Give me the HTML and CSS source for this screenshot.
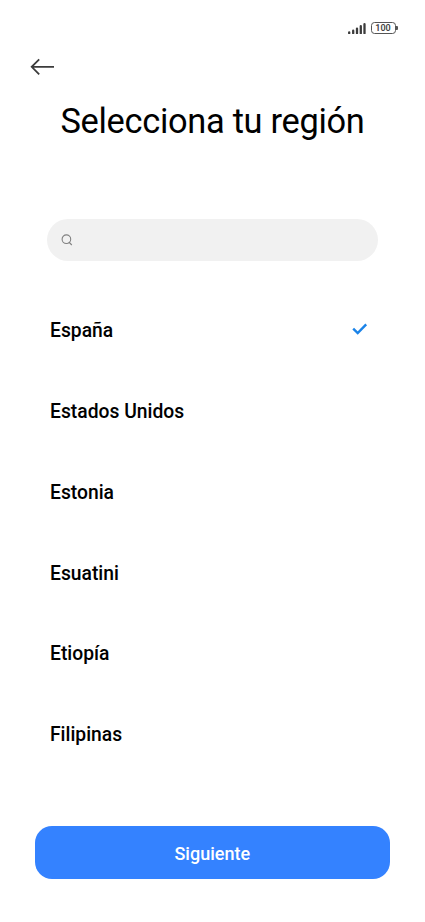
FILE: index.html
```html
<!DOCTYPE html>
<html lang="es">
<head>
<meta charset="utf-8">
<title>Selecciona tu región</title>
<link rel="stylesheet" href="styles.css">
</head>
<body>
<main class="screen">
  <header class="status">
    <svg class="signal" width="18" height="12" viewBox="0 0 18 12"><path d="M1.2 10.3v.9M5.2 8.7v2.5M9 6.6v4.6M12.8 4.2v7M16.5 2.2v9"/></svg>
    <div class="battery">100</div>
  </header>
  <nav class="nav"><svg class="back" width="26" height="20" viewBox="0 0 26 20"><path d="M9.2 2.3L1.7 9.8L9.2 17.3M1.7 9.8H24"/></svg></nav>
  <h1 class="title">Selecciona tu región</h1>
  <div class="search"><svg class="glass" width="12" height="12" viewBox="0 0 12 12"><circle cx="5.4" cy="5.2" r="4.3"/><path d="M7.8 8L10.8 11"/></svg></div>
  <ul class="list">
    <li class="item">España<svg class="check" width="16" height="12" viewBox="0 0 16 12"><path d="M1.2 5.7L5.7 10.1L14.2 1.3"/></svg></li>
    <li class="item">Estados Unidos</li>
    <li class="item">Estonia</li>
    <li class="item">Esuatini</li>
    <li class="item">Etiopía</li>
    <li class="item">Filipinas</li>
  </ul>
  <button class="next">Siguiente</button>
</main>
</body>
</html>
```
FILE: styles.css
```css
* { box-sizing: border-box; }
body { margin: 0; background: #fff; font-family: Roboto, sans-serif; color: #000; }
svg { display: block; fill: none; }
.screen { width: 425px; height: 922px; display: flex; flex-direction: column; overflow: hidden; }
.status { display: flex; gap: 4.5px; padding: 22px 27px 0 348px; height: 54px; }
.signal { stroke: #3c3c3c; stroke-width: 2.3; stroke-linecap: round; }
.battery { position: relative; flex: none; width: 25px; height: 12px; border: 1px solid #555; border-radius: 3.5px; font: 600 9px/11px Roboto, sans-serif; text-align: center; color: #444; }
.battery::after { content: ""; position: absolute; right: -3px; top: 3px; width: 2px; height: 4px; border-radius: 0 1px 1px 0; background: #555; }
.nav { padding: 3px 0 0 30px; height: 40px; }
.back { stroke: #3c3c3c; stroke-width: 1.8; }
.title { margin: 0; height: 125px; padding-top: 7px; text-align: center; font-size: 34.4px; line-height: 41px; font-weight: 400; letter-spacing: -.3px; }
.search { width: 330.5px; height: 42px; margin-left: 47px; border-radius: 21px; background: #f1f1f1; padding: 15px 14px; }
.glass { stroke: #808080; stroke-width: 1.1; }
.list { list-style: none; margin: 30.2px 0 0; padding: 0 57.5px 0 50px; }
.item { height: 80.8px; padding-top: 28px; font-size: 19.3px; line-height: 24px; font-weight: 500; display: flex; justify-content: space-between; }
.check { stroke: #1b83e8; stroke-width: 2.4; margin-top: 4px; }
.next { border: 0; width: 355.5px; height: 53px; margin: 50.3px 0 0 34.5px; border-radius: 17px; background: #3482ff; color: #fff; font: 500 18px/24px Roboto, sans-serif; padding: 3px 0 0; }
```
